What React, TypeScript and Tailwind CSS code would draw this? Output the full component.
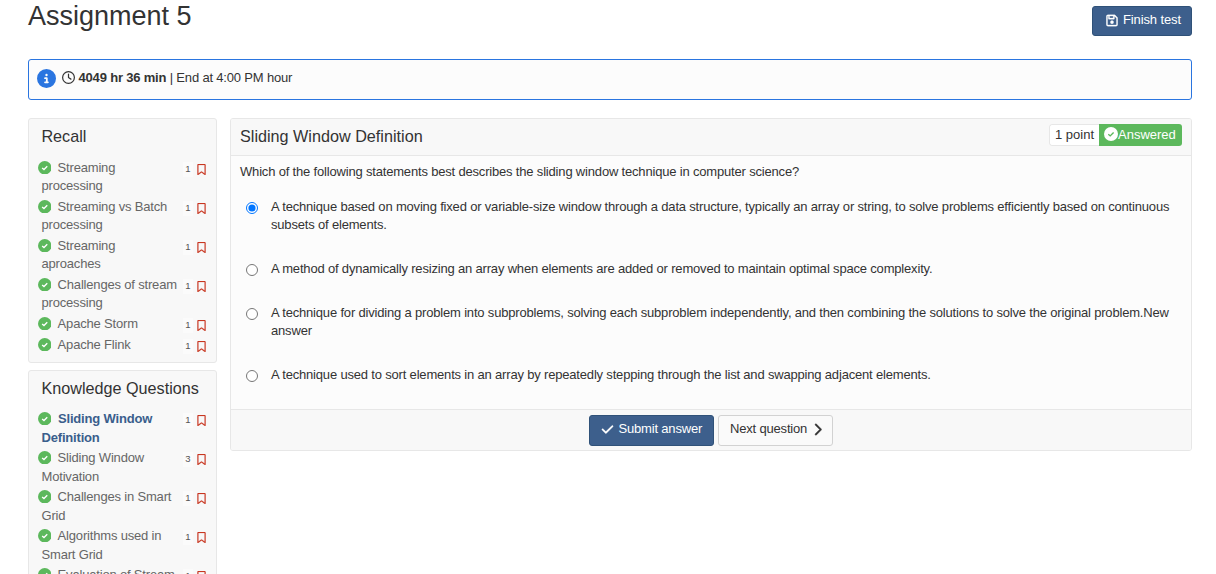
import React, { useState } from "react";
import { FaCheck, FaChevronRight, FaCircleInfo, FaRegBookmark, FaRegClock, FaRegFloppyDisk } from "react-icons/fa6";

type Item = { lines: string[]; points: number; active?: boolean };

const recall: Item[] = [
  { lines: ["Streaming", "processing"], points: 1 },
  { lines: ["Streaming vs Batch", "processing"], points: 1 },
  { lines: ["Streaming", "aproaches"], points: 1 },
  { lines: ["Challenges of stream", "processing"], points: 1 },
  { lines: ["Apache Storm"], points: 1 },
  { lines: ["Apache Flink"], points: 1 },
];

const knowledge: Item[] = [
  { lines: ["Sliding Window", "Definition"], points: 1, active: true },
  { lines: ["Sliding Window", "Motivation"], points: 3 },
  { lines: ["Challenges in Smart", "Grid"], points: 1 },
  { lines: ["Algorithms used in", "Smart Grid"], points: 1 },
  { lines: ["Evaluation of Stream"], points: 1 },
];

const answers = [
  {
    lines: [
      "A technique based on moving fixed or variable-size window through a data structure, typically an array or string, to solve problems efficiently based on continuous",
      "subsets of elements.",
    ],
  },
  { lines: ["A method of dynamically resizing an array when elements are added or removed to maintain optimal space complexity."] },
  {
    lines: [
      "A technique for dividing a problem into subproblems, solving each subproblem independently, and then combining the solutions to solve the original problem.New",
      "answer",
    ],
  },
  { lines: ["A technique used to sort elements in an array by repeatedly stepping through the list and swapping adjacent elements."] },
];

function CheckBadge({ className, tick }: { className: string; tick: string }) {
  return (
    <svg viewBox="0 0 14 14" className={className}>
      <circle cx="7" cy="7" r="7" fill="currentColor" />
      <path d="M4.3 7.2 6.2 8.9 9.6 5.4" fill="none" stroke={tick} strokeWidth="1.4" />
    </svg>
  );
}

type SectionProps = {
  title: string;
  items: Item[];
  className: string;
  listClass: string;
  rowClass: string;
  lineClass: string;
  badgeClass: string;
  sideClass: string;
};

function Section({ title, items, className, listClass, rowClass, lineClass, badgeClass, sideClass }: SectionProps) {
  return (
    <section className={`w-[189px] rounded-[3px] border border-[#e7e7e7] bg-[#f8f8f8] ${className}`}>
      <h2 className="pl-[12.4px] pt-[7px] text-[16.2px] leading-5 tracking-normal whitespace-nowrap">{title}</h2>
      <ul className={listClass}>
        {items.map((item, i) => (
          <li key={i} className={`flex justify-between pr-2.5 pl-[8.5px] ${rowClass}`}>
            <div className={`whitespace-nowrap ${lineClass} ${item.active ? "font-bold text-[#3a5e8c]" : "text-[#666]"}`}>
              <div className="flex">
                <CheckBadge className={`h-[13.5px] w-[13.5px] text-[#5cb85c] ${badgeClass} ${item.active ? "mr-[7px]" : "mr-[6.6px]"}`} tick="#fff" />
                {item.lines[0]}
              </div>
              {item.lines[1] && <div className="pl-[4px]">{item.lines[1]}</div>}
            </div>
            <div className={`flex h-[18px] ${sideClass}`}>
              <span className="mr-1 h-[15px] w-2.5 bg-[#fbfbfb] text-center text-[9.5px] leading-[13px] tracking-normal text-[#555]">{item.points}</span>
              <FaRegBookmark className="mt-[1.5px] h-[11px] w-[9px] stroke-[#c9302c] stroke-[8] text-[#c93a20]" />
            </div>
          </li>
        ))}
      </ul>
    </section>
  );
}

export default function App() {
  const [chosen, setChosen] = useState(0);
  return (
    <div className="h-[574px] overflow-hidden bg-white pr-6 pl-7 font-['Liberation_Sans',Arial,sans-serif] text-[13px] tracking-[-0.18px] text-[#333]">
      <header className="flex h-[59px] justify-between">
        <h1 className="text-[27px] leading-8 tracking-normal">Assignment 5</h1>
        <button className="mt-1.5 flex h-[30px] w-[100px] items-center rounded-[3px] border border-[#2f5178] bg-[#3d5f8c] pb-0.5 pl-[13px] tracking-[-0.12px] text-white whitespace-nowrap">
          <FaRegFloppyDisk className="mr-[5px] h-[13px] w-3 stroke-white stroke-[12]" />
          Finish test
        </button>
      </header>

      <div className="flex h-[41px] rounded-[3px] border border-[#2a75e0] bg-[#fcfcfc] pt-[9px] pl-2 leading-[18px]">
        <FaCircleInfo className="h-[19px] w-[19px] text-[#2a75e0]" />
        <FaRegClock className="mt-0.5 mr-[3.5px] ml-1.5 h-[13px] w-[13px]" />
        <p><b>4049 hr 36 min</b> | End at 4:00 PM hour</p>
      </div>

      <div className="flex gap-[13px] pt-[18px]">
        <aside className="flex shrink-0 flex-col gap-[7px]">
          <Section
            title="Recall"
            items={recall}
            className="h-[245px]"
            listClass="pt-[13px]"
            rowClass="pb-[3px]"
            lineClass="leading-[18px]"
            badgeClass="mt-[1.5px]"
            sideClass="pt-[3px]"
          />
          <Section
            title="Knowledge Questions"
            items={knowledge}
            className="h-[260px]"
            listClass="pt-[11px]"
            rowClass="pb-px"
            lineClass="leading-[19px]"
            badgeClass="mt-[2.5px]"
            sideClass="pt-1"
          />
        </aside>

        <main className="flex h-[333px] w-[962px] flex-col overflow-hidden rounded-[3px] border border-[#e7e7e7] bg-[#fcfcfc]">
          <div className="flex h-[37px] justify-between border-b border-[#e7e7e7] bg-[#f8f8f8] px-[9px]">
            <h2 className="pt-[7px] text-[16.2px] leading-5 tracking-normal">Sliding Window Definition</h2>
            <div className="mt-[5px] flex h-[22px] overflow-hidden rounded-[3px] leading-[21px] tracking-normal whitespace-nowrap">
              <span className="w-[50px] rounded-l-[3px] border border-r-0 border-[#e7e7e7] bg-white pl-[5px] leading-[19px]">1 point</span>
              <span className="flex w-[83px] bg-[#5cb85c] pl-[5px] text-white">
                <CheckBadge className="mt-[3px] h-3.5 w-3.5 shrink-0 text-white" tick="#5cb85c" />
                Answered
              </span>
            </div>
          </div>

          <div className="flex-1 pt-[7px] pl-[9px] leading-[18px] whitespace-nowrap">
            <p>Which of the following statements best describes the sliding window technique in computer science?</p>
            <div className="flex flex-col gap-[26px] pt-[17px]">
              {answers.map((answer, i) => (
                <label key={i} className="flex">
                  <input type="radio" name="answer" checked={chosen === i} onChange={() => setChosen(i)} className="mt-1 mr-[13px] ml-1.5 h-3 w-3" />
                  <span>
                    {answer.lines.map((line) => <span key={line} className="block">{line}</span>)}
                  </span>
                </label>
              ))}
            </div>
          </div>

          <div className="flex h-[41px] justify-center gap-1 border-t border-[#e7e7e7] bg-[#f8f8f8] pt-[5px]">
            <button className="flex h-[31px] w-[125px] items-center rounded-[3px] border border-[#2f5178] bg-[#3d5f8c] pb-[3px] pl-[11px] text-white whitespace-nowrap">
              <FaCheck className="mr-[4.5px] h-[13px] w-[13px] stroke-white stroke-[12]" />
              Submit answer
            </button>
            <button className="flex h-[31px] w-[115px] items-center rounded-[3px] border border-[#d2d2d2] bg-[#fafafa] pb-[3px] pl-[11px] whitespace-nowrap">
              Next question
              <FaChevronRight className="ml-1.5 h-[13px] w-[9px] stroke-[#333] stroke-[16]" />
            </button>
          </div>
        </main>
      </div>
    </div>
  );
}
